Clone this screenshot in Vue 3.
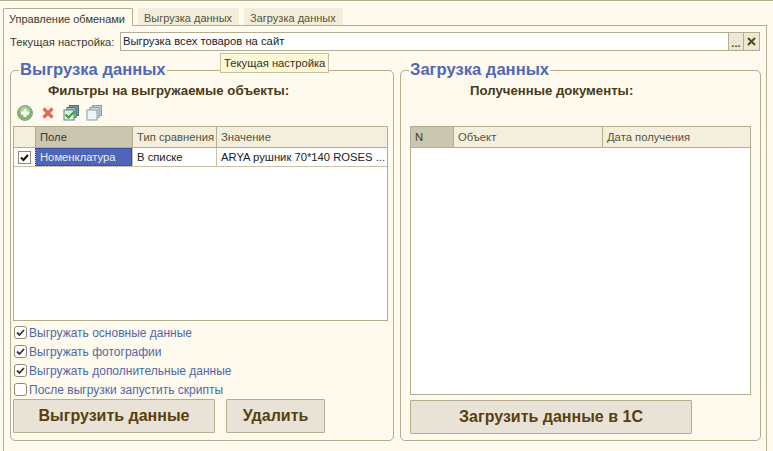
<template>
  <div class="page">
    <div class="tabs">
      <div v-for="(tab, i) in tabs" :key="tab" :class="['tab', { active: i === 0 }]">{{ tab }}</div>
    </div>
    <div class="panel">
      <div class="setting">
        <label>Текущая настройка:</label>
        <div class="input">
          <span class="input-text">Выгрузка всех товаров на сайт</span>
          <span class="input-btn dots">...</span>
          <span class="input-btn close">
            <svg width="11" height="11" viewBox="0 0 11 11">
              <path d="M2 2l7 7M9 2l-7 7" stroke="#5a4614" stroke-width="2" fill="none" />
            </svg>
          </span>
        </div>
      </div>
      <div class="tooltip">Текущая настройка</div>

      <div class="groups">
        <fieldset class="group left">
          <legend>Выгрузка данных</legend>
          <div class="caption left-caption">Фильтры на выгружаемые объекты:</div>
          <div class="toolbar">
            <svg width="16" height="16" viewBox="0 0 16 16">
              <circle cx="8" cy="8" r="7.500" fill="#82b56e" stroke="#8fa88a" />
              <circle cx="8" cy="6.500" r="5" fill="#a9d095" />
              <path d="M8 4v8M4 8h8" stroke="#fff" stroke-width="2.800" />
            </svg>
            <svg width="16" height="16" viewBox="0 0 16 16">
              <path d="M3.500 3.500l9 9M12.500 3.500l-9 9" stroke="#e8665f" stroke-width="3.200" fill="none" />
            </svg>
            <svg width="16" height="16" viewBox="0 0 16 16">
              <rect x="6.500" y="0.500" width="9" height="10" fill="#7d9a98" stroke="#4f7076" />
              <rect x="4" y="2.500" width="9" height="10" fill="#a5bbb8" stroke="#4f7076" />
              <rect x="1" y="5" width="10" height="10" fill="#e8efe8" stroke="#5f8086" />
              <path d="M2.500 9.500l3 3 6-6" stroke="#35a535" stroke-width="2.200" fill="none" />
            </svg>
            <svg width="16" height="16" viewBox="0 0 16 16">
              <rect x="6.500" y="0.500" width="9" height="10" fill="#bccdd2" stroke="#84a0a6" />
              <rect x="4" y="2.500" width="9" height="10" fill="#cfdde0" stroke="#84a0a6" />
              <rect x="1" y="5" width="10" height="10" fill="#eef3f5" stroke="#84a0a6" />
            </svg>
          </div>
          <div class="grid">
            <div class="grid-head left-cols">
              <span></span>
              <span class="sel">Поле</span>
              <span>Тип сравнения</span>
              <span>Значение</span>
            </div>
            <div class="grid-row left-cols">
              <span class="mark">
                <i class="box">
                  <svg width="11" height="11" viewBox="0 0 11 11">
                    <path d="M2 5.500l2.500 2.500 4.500-5" stroke="#111" stroke-width="2" fill="none" />
                  </svg>
                </i>
              </span>
              <span class="current">Номенклатура</span>
              <span>В списке</span>
              <span>ARYA рушник 70*140 ROSES ...</span>
            </div>
          </div>
          <div class="checks">
            <label v-for="c in checks" :key="c.text" :class="['check', { off: !c.on }]">
              <i class="round">
                <svg v-if="c.on" width="11" height="11" viewBox="0 0 11 11">
                  <path d="M2 5.500l2.500 2.500 4.500-5" stroke="#333" stroke-width="1.800" fill="none" />
                </svg>
              </i>{{ c.text }}
            </label>
          </div>
          <div class="buttons">
            <button class="btn unload">Выгрузить данные</button>
            <button class="btn remove">Удалить</button>
          </div>
        </fieldset>

        <fieldset class="group right">
          <legend>Загрузка данных</legend>
          <div class="caption right-caption">Полученные документы:</div>
          <div class="toolbar-gap"></div>
          <div class="grid">
            <div class="grid-head right-cols">
              <span class="sel">N</span>
              <span>Объект</span>
              <span>Дата получения</span>
            </div>
          </div>
          <div class="buttons">
            <button class="btn load">Загрузить данные в 1С</button>
          </div>
        </fieldset>
      </div>
    </div>
  </div>
</template>

<script setup>
const tabs = ['Управление обменами', 'Выгрузка данных', 'Загрузка данных']
const checks = [
  { text: 'Выгружать основные данные', on: true },
  { text: 'Выгружать фотографии', on: true },
  { text: 'Выгружать дополнительные данные', on: true },
  { text: 'После выгрузки запустить скрипты', on: false }
]
</script>

<style>
html, body {
  margin: 0;
  background: #fefaee;
}
</style>

<style scoped>
.page {
  width: 773px;
  height: 451px;
  overflow: hidden;
  box-sizing: border-box;
  background: #fefaee;
  border-top: 1px solid #b5ad8f;
  padding: 7px 6px 0 3px;
  font: 11.25px "Liberation Sans", Arial, sans-serif;
  color: #3c3a2c;
}
.tabs {
  display: flex;
  height: 17px;
  gap: 5px;
  position: relative;
  z-index: 1;
  font-size: 11px;
}
.tab {
  background: #f2eeda;
  padding: 3px 7px 0 6px;
  line-height: 14px;
  color: #55523f;
}
.tab.active {
  background: #fefaee;
  border: 1px solid #b5ad8f;
  border-bottom: 0;
  border-radius: 2px 2px 0 0;
  height: 18px;
  box-sizing: border-box;
  padding: 3px 7px 0 5px;
  color: #3c3a2c;
}
.panel {
  position: relative;
  border: 1px solid #b5ad8f;
  height: 440px;
  box-sizing: border-box;
  padding: 6px 6px 0 6px;
}
.setting {
  display: flex;
  align-items: center;
  height: 19px;
}
.setting label {
  width: 110px;
  white-space: nowrap;
}
.input {
  flex: 1;
  height: 19px;
  box-sizing: border-box;
  display: flex;
  background: #fff;
  border: 1px solid #b5ad8f;
  align-items: stretch;
  line-height: 17px;
}
.input-text {
  flex: 1;
  padding-left: 2px;
  color: #222;
}
.input-btn {
  width: 15px;
  background: #ece8d6;
  border-left: 1px solid #b5ad8f;
  display: flex;
  align-items: center;
  justify-content: center;
}
.dots {
  font-weight: bold;
  color: #5a4614;
  line-height: 22px;
  padding-top: 3px;
  box-sizing: border-box;
}
.tooltip {
  position: absolute;
  left: 216px;
  top: 27px;
  z-index: 2;
  background: #fdf8d8;
  border: 1px solid #c7bf9f;
  padding: 2px 3px;
  line-height: 14px;
  color: #33301f;
}
.groups {
  display: grid;
  grid-template-columns: 384px 361px;
  gap: 6px;
  margin-top: 9px;
}
.group {
  margin: 0;
  padding: 0 5px 6px 2px;
  min-width: 0;
  border: 1px solid #b5ad8f;
  border-radius: 5px;
  height: 381px;
  box-sizing: border-box;
  position: relative;
}
.group.right {
  padding: 0 9px 6px 9px;
}
.group legend {
  font-size: 16.6px;
  line-height: 20px;
  font-weight: bold;
  color: #5068b8;
  padding: 0 1px;
  margin-left: 6px;
}
.group.right legend {
  margin-left: -1px;
}
.caption {
  font-size: 13.2px;
  font-weight: bold;
  color: #4a3a16;
  line-height: 16px;
  margin-top: 3px;
}
.left-caption {
  padding-left: 35px;
}
.right-caption {
  padding-left: 60px;
}
.toolbar {
  display: flex;
  align-items: center;
  gap: 7px;
  height: 18px;
  margin: 5px 0 4px 4px;
}
.toolbar-gap {
  height: 27px;
}
.grid {
  border: 1px solid #b5ad8f;
  background: #fff;
}
.left .grid {
  height: 195px;
  box-sizing: border-box;
}
.right .grid {
  height: 269px;
  box-sizing: border-box;
}
.grid-head, .grid-row {
  display: grid;
  line-height: 20px;
}
.left-cols {
  grid-template-columns: 21px 97px 84px 1fr;
}
.right-cols {
  grid-template-columns: 42px 149px 1fr;
}
.grid-head {
  background: #f3efdc;
  border-bottom: 1px solid #b5ad8f;
  color: #55523f;
}
.grid-head span, .grid-row span {
  padding-left: 4px;
  white-space: nowrap;
  overflow: hidden;
}
.grid-head span + span {
  border-left: 1px solid #b5ad8f;
}
.grid-head .sel {
  background: #cbc6b0;
  color: #3c3a2c;
}
.grid-row {
  border-bottom: 1px solid #c9c2a6;
  line-height: 18px;
  color: #222;
}
.grid-row span + span {
  border-left: 1px solid #c9c2a6;
}
.grid-row .current {
  background: #4f66b8;
  color: #e8ecf8;
  outline: 1px dotted #2d3a70;
  outline-offset: -1px;
}
.grid-row .mark {
  padding: 0;
  display: flex;
  align-items: center;
  justify-content: center;
}
.box {
  width: 11px;
  height: 11px;
  border: 1px solid #8d8a78;
  display: flex;
}
.checks {
  display: flex;
  flex-direction: column;
  margin-top: 2px;
  font-size: 12px;
}
.check {
  display: flex;
  align-items: center;
  gap: 2px;
  height: 19px;
  color: #5068a8;
}
.round {
  width: 11px;
  height: 11px;
  margin-left: 1px;
  border: 1px solid #8d8a78;
  border-radius: 3px;
  background: #fff;
  display: flex;
}
.buttons {
  display: flex;
  gap: 11px;
}
.right .buttons {
  margin-top: 5px;
}
.btn {
  height: 34px;
  background: #e8e3d6;
  border: 1px solid #b5ad8f;
  border-radius: 1px;
  font: bold 16px "Liberation Sans", Arial, sans-serif;
  color: #59400e;
  padding: 0;
}
.unload {
  width: 202px;
}
.remove {
  width: 99px;
}
.load {
  width: 282px;
}
</style>
